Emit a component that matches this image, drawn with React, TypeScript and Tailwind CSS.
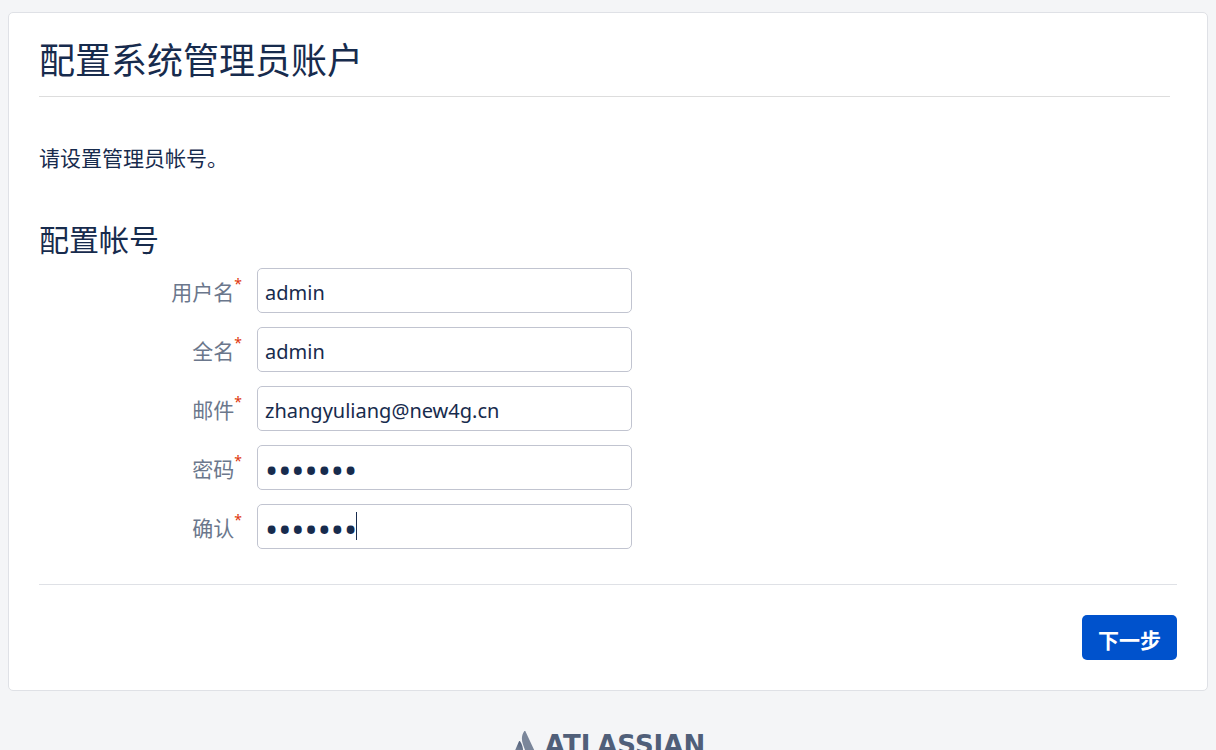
import { useState } from 'react';

type Field = { id: string; label: string; type: 'text' | 'email' | 'password'; value: string; active?: boolean };

const fields: Field[] = [
  { id: 'username', label: '用户名', type: 'text', value: 'admin' },
  { id: 'fullname', label: '全名', type: 'text', value: 'admin' },
  { id: 'email', label: '邮件', type: 'email', value: 'zhangyuliang@new4g.cn' },
  { id: 'password', label: '密码', type: 'password', value: 'admin12' },
  { id: 'confirm', label: '确认', type: 'password', value: 'admin12', active: true },
];

function FieldRow({ field }: { field: Field }) {
  const [value, setValue] = useState(field.value);
  // Password bullets are drawn larger than ordinary text.
  const size = field.type === 'password' ? 'text-[35px]' : 'text-xl';
  return (
    <div className="flex items-center">
      <label htmlFor={field.id} className="flex w-[203px] shrink-0 items-center justify-end pt-[3px] text-[21px] leading-[30px] text-[#6b778c]">
        {field.label}
        <span className="-mt-4 text-sm leading-[18px] text-[#de350b]">*</span>
      </label>
      <div className="relative ml-[15px] w-full max-w-[375px]">
        <input
          id={field.id}
          type={field.type}
          value={value}
          onChange={(e) => setValue(e.target.value)}
          className={`block h-[45px] w-full rounded-[5px] border border-[#c1c4d0] bg-white px-[7px] pt-1 leading-[30px] text-[#172b4d] outline-none ${size}`}
        />
        {field.active && <span className="absolute top-2 left-[99px] h-7 w-px bg-[#172b4d]" />}
      </div>
    </div>
  );
}

function AtlassianLogo() {
  return (
    <a href="#atlassian" aria-label="Atlassian" className="flex items-start justify-center gap-2 text-[#505f79]">
      <svg viewBox="0 0 24 26" className="mt-[7px] h-[26px] w-6" aria-hidden="true">
        <defs>
          <linearGradient id="peak" x1="8" y1="10" x2="3" y2="21" gradientUnits="userSpaceOnUse">
            <stop offset="0" stopColor="#505f79" />
            <stop offset="1" stopColor="#7a869a" />
          </linearGradient>
        </defs>
        <path d="M7.200 10.400c-.4-.5-1-.4-1.300.2L.1 24c-.2.500.1 1 .600 1h8c.300 0 .500-.100.600-.400 1.600-3.700 1-9.700-2.100-14.200z" fill="url(#peak)" />
        <path d="M11.200.300c-2.600 3.700-3 8.700-1.200 13.100L14 24.400c.100.300.400.600.700.600h8.200c.600 0 .900-.500.600-1L12.400.300c-.200-.500-.900-.500-1.200 0z" fill="#7a869a" />
      </svg>
      <span className="font-['DejaVu_Sans',sans-serif] text-[26px] leading-[42px] font-bold">ATLASSIAN</span>
    </a>
  );
}

export default function App() {
  return (
    <div className="min-h-screen bg-[#f4f5f7] px-2 pt-3 font-['Noto_Sans','Noto_Sans_CJK_SC',sans-serif] text-[#172b4d]">
      <main className="rounded-[5px] border border-[#dfe1e6] bg-white p-[30px]">
        <h1 className="mr-[7px] -mt-[7px] border-b border-[#dddddd] pb-[11px] text-4xl leading-[49px] font-normal">配置系统管理员账户</h1>
        <p className="mt-[46px] text-[21px] leading-[30px]">请设置管理员帐号。</p>
        <form onSubmit={(e) => e.preventDefault()}>
          <h2 className="mt-[47px] text-[30px] leading-10 font-normal">配置帐号</h2>
          <div className="mt-2 flex flex-col gap-3.5">
            {fields.map((field) => (
              <FieldRow key={field.id} field={field} />
            ))}
          </div>
          <div className="mt-[35px] flex justify-end border-t border-[#dfe1e6] pt-[30px]">
            <button type="submit" className="h-[45px] rounded-[5px] bg-[#0052cc] px-4 pt-1 text-[21px] leading-[30px] font-bold text-white">
              下一步
            </button>
          </div>
        </form>
      </main>
      <footer className="pt-[33px] pl-0.5">
        <AtlassianLogo />
      </footer>
    </div>
  );
}
